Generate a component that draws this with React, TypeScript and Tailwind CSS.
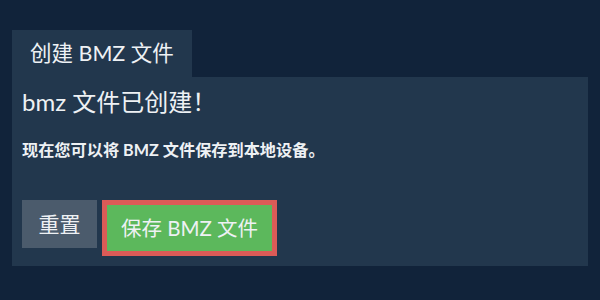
export default function App() {
  const font = { fontFamily: 'Lato, "Noto Sans CJK SC", sans-serif' };
  return (
    <div className="min-h-[300px] w-[600px] bg-[#11233a] px-3 pt-[30px] text-[#eef1f4]" style={font}>
      <div className="flex h-[47px] w-[180px] items-center bg-[#22374d] pl-[18px] text-[21.5px]">
        创建 BMZ 文件
      </div>
      <div className="h-[189px] w-[576px] bg-[#22374d] px-[10px] pt-[10px]">
        <h2 className="text-[24px] leading-[30px]">bmz 文件已创建！</h2>
        <p className="mt-[23px] text-[16.2px] leading-[20px] font-bold">现在您可以将 BMZ 文件保存到本地设备。</p>
        <div className="mt-[40px] flex items-start gap-[5px]">
          <button className="flex h-[48px] w-[75px] items-center justify-center bg-[#4b5b6c] text-[21px]">
            重置
          </button>
          <button className="flex h-[56px] w-[175px] items-center justify-center border-[5px] border-[#db5b57] bg-[#5cb85c] text-[20.5px]">
            保存 BMZ 文件
          </button>
        </div>
      </div>
    </div>
  );
}
